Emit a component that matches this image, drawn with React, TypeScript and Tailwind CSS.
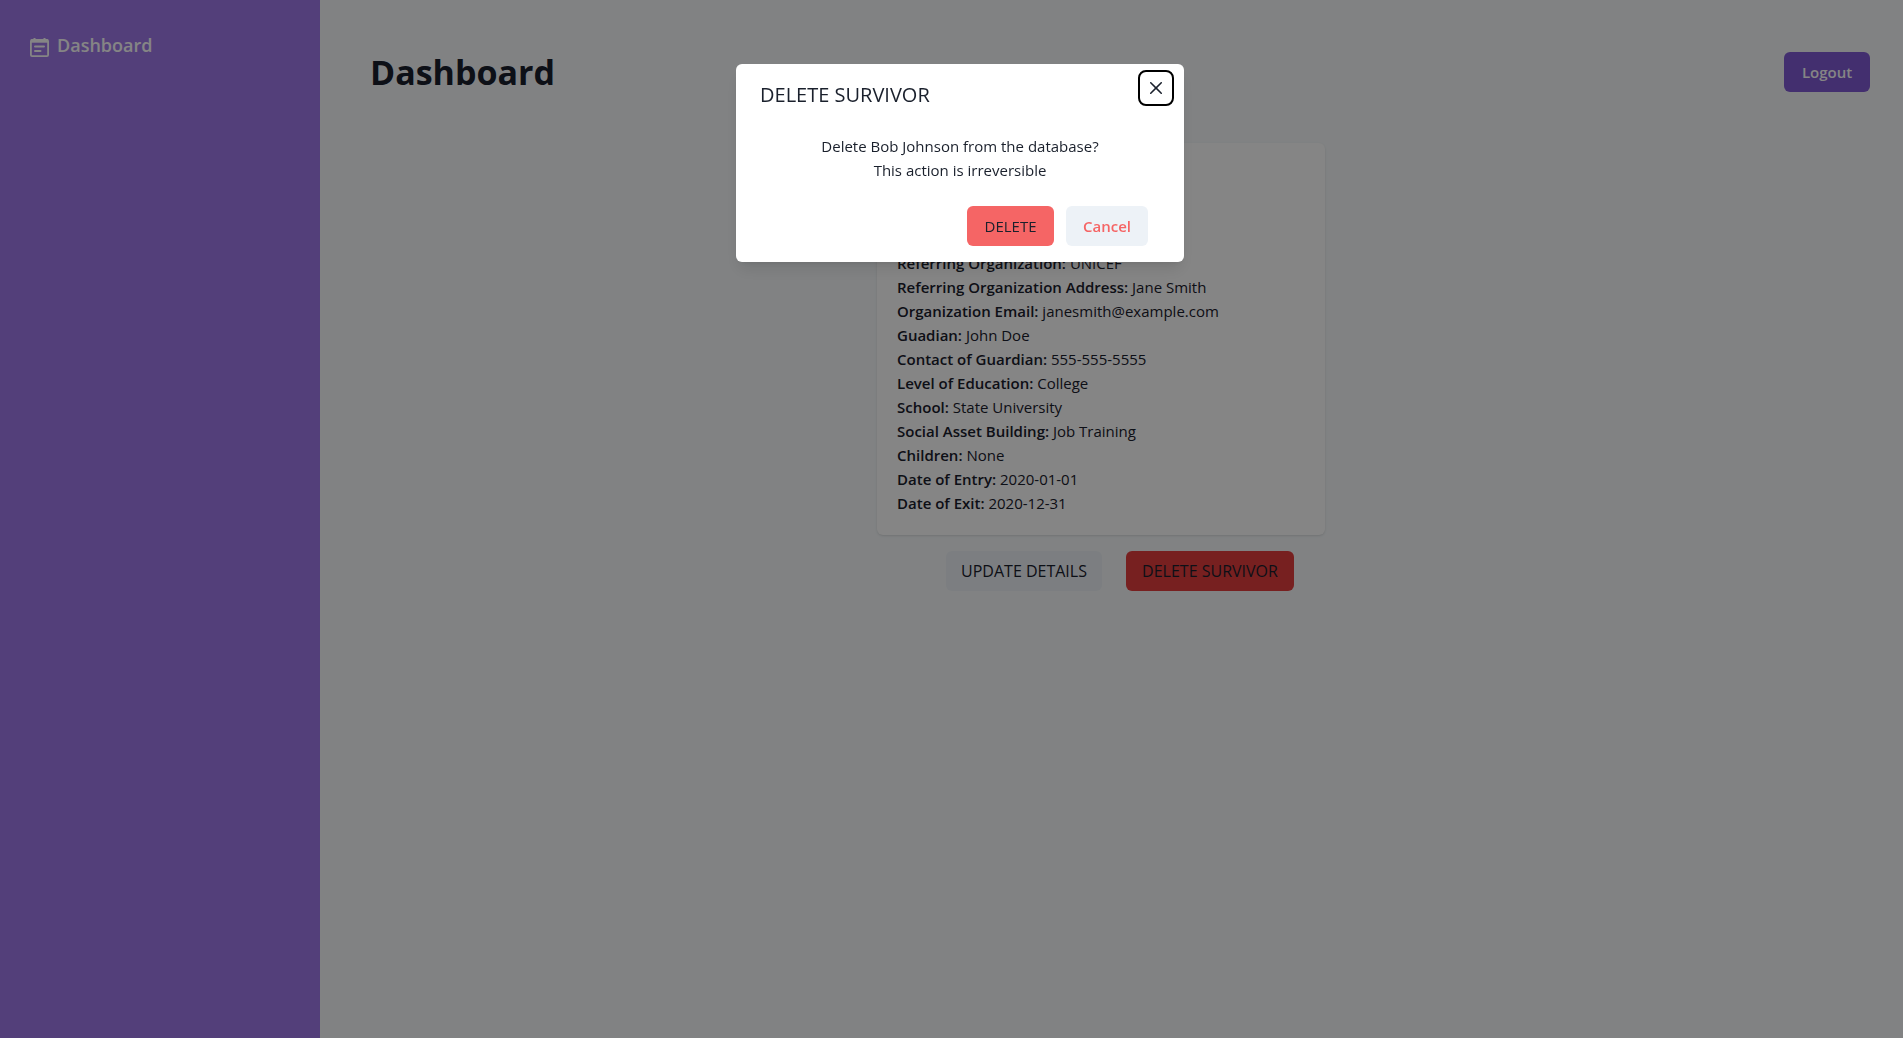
import React from "react";

const details: [string, string][] = [
  ["Referring Organization:", "UNICEF"],
  ["Referring Organization Address:", "Jane Smith"],
  ["Organization Email:", "janesmith@example.com"],
  ["Guadian:", "John Doe"],
  ["Contact of Guardian:", "555-555-5555"],
  ["Level of Education:", "College"],
  ["School:", "State University"],
  ["Social Asset Building:", "Job Training"],
  ["Children:", "None"],
  ["Date of Entry:", "2020-01-01"],
  ["Date of Exit:", "2020-12-31"],
];

function CalendarIcon() {
  return (
    <svg viewBox="0 0 19 19" className="size-[19px] shrink-0" fill="none" stroke="currentColor" aria-hidden="true">
      <rect x="0.9" y="2" width="17.2" height="16.1" rx="1.2" strokeWidth="1.8" />
      <path d="M1 3h17" strokeWidth="3.4" />
      <path d="M4.5 0v2M14.5 0v2" strokeWidth="2" />
      <path d="M5 8.5h9M5 13h5.5" strokeWidth="2" strokeLinecap="round" />
    </svg>
  );
}

function Sidebar() {
  return (
    <aside className="w-80 shrink-0 bg-[#9f7aea] px-[30px] py-[31px] text-white">
      <nav>
        <a href="#dashboard" className="flex items-center gap-2 text-lg leading-7 font-semibold">
          <CalendarIcon />
          <span className="pb-1">Dashboard</span>
        </a>
      </nav>
    </aside>
  );
}

function SurvivorCard() {
  return (
    <article className="rounded-md bg-white px-5 pt-27 pb-5 shadow">
      {details.map(([label, value]) => (
        <p key={label}>
          <span className="font-semibold">{label}</span> {value}
        </p>
      ))}
    </article>
  );
}

function DeleteDialog() {
  return (
    <div className="fixed inset-0 flex items-start justify-center bg-black/[0.48] pt-16 pl-[17px]">
      <section
        role="dialog"
        aria-modal="true"
        aria-labelledby="dialog-title"
        className="relative w-full max-w-md rounded-md bg-white shadow-lg"
      >
        <h2 id="dialog-title" className="px-6 py-4 text-xl leading-[30px] font-medium">
          DELETE SURVIVOR
        </h2>
        <button
          type="button"
          aria-label="Close"
          className="absolute top-2 right-3 flex size-8 items-center justify-center rounded-md outline-2 outline-black"
        >
          <svg viewBox="0 0 24 24" className="size-3" fill="currentColor" aria-hidden="true">
            <path d="M.439,21.44a1.5,1.5,0,0,0,2.122,2.121L11.823,14.3a.25.25,0,0,1,.354,0l9.262,9.263a1.5,1.5,0,1,0,2.122-2.121L14.3,12.177a.25.25,0,0,1,0-.354l9.263-9.262A1.5,1.5,0,0,0,21.439.44L12.177,9.7a.25.25,0,0,1-.354,0L2.561.44A1.5,1.5,0,0,0,.439,2.561L9.7,11.823a.25.25,0,0,1,0,.354Z" />
          </svg>
        </button>
        <div className="px-6 py-2 text-center">
          <p>Delete Bob Johnson from the database?</p>
          <p>This action is irreversible</p>
        </div>
        <footer className="flex justify-end gap-3 py-4 pr-9 pl-6">
          <button type="button" className="h-10 w-[87px] rounded-md bg-[#f56565] font-medium">
            DELETE
          </button>
          <button type="button" className="h-10 w-[82px] rounded-md bg-[#edf2f7] font-semibold text-[#f56565]">
            Cancel
          </button>
        </footer>
      </section>
    </div>
  );
}

export default function App() {
  return (
    <div className="flex min-h-screen bg-[#f7fafc] font-['Open_Sans',sans-serif] text-[15px] leading-6 text-[#1a202c]">
      <Sidebar />
      <main className="min-w-0 flex-1 py-[45px]">
        <header className="flex items-center justify-between pr-[33px] pl-[50px]">
          <h1 className="text-[34px] leading-[54px] font-bold">Dashboard</h1>
          <button type="button" className="h-10 w-[86px] rounded-md bg-[#805ad5] font-semibold text-white">
            Logout
          </button>
        </header>
        <div className="flex justify-center pt-11 pr-[21px]">
          <div className="w-full max-w-md">
            <SurvivorCard />
            <div className="flex justify-center gap-6 pt-4 pl-[38px]">
              <button type="button" className="h-10 w-[156px] rounded-md bg-[#edf2f7] text-base font-medium">
                UPDATE DETAILS
              </button>
              <button type="button" className="h-10 w-[168px] rounded-md bg-[#e53e3e] text-base font-medium">
                DELETE SURVIVOR
              </button>
            </div>
          </div>
        </div>
      </main>
      <DeleteDialog />
    </div>
  );
}
